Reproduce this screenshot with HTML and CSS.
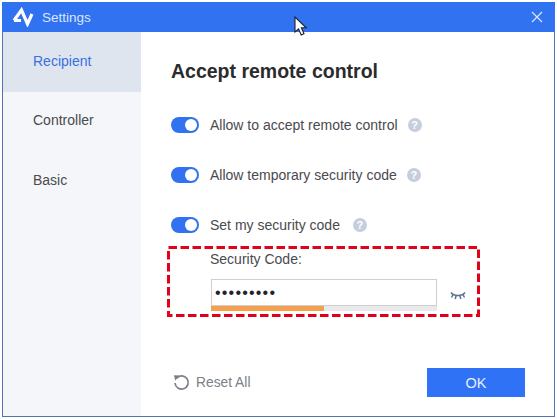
FILE: index.html

```html
<!DOCTYPE html>
<html lang="en">
<head>
    <meta charset="UTF-8">
    <meta name="viewport" content="width=device-width, initial-scale=1.0">
    <title>Settings</title>
    <link rel="stylesheet" href="styles.css">
</head>
<body>

    <div class="fenetre">
        <div class="titre">
            <svg class="logo" width="22" height="20" viewBox="0 0 22 20">
                <path d="M2 13.5H9M2 13.5L9.5 3L15.5 17L20 7" fill="none" stroke="#fff" stroke-width="3.2" stroke-linejoin="miter"/>
            </svg>
            <span class="titre-texte">Settings</span>
            <svg class="fermer" width="12" height="12" viewBox="0 0 12 12">
                <path d="M1 1L11 11M11 1L1 11" stroke="#dbe6fd" stroke-width="1.2"/>
            </svg>
        </div>

        <div class="contenu">
            <div class="menu">
                <div class="menu-item actif">Recipient</div>
                <div class="menu-item">Controller</div>
                <div class="menu-item">Basic</div>
            </div>

            <div class="page">
                <h1>Accept remote control</h1>

                <div class="ligne">
                    <span class="switch"></span>
                    <span>Allow to accept remote control</span>
                    <span class="aide aide-1">?</span>
                </div>
                <div class="ligne">
                    <span class="switch"></span>
                    <span>Allow temporary security code</span>
                    <span class="aide aide-2">?</span>
                </div>
                <div class="ligne">
                    <span class="switch"></span>
                    <span>Set my security code</span>
                    <span class="aide aide-3">?</span>
                </div>

                <div class="cadre">
                    <svg class="pointilles" width="313" height="71" viewBox="0 0 313 71">
                        <rect x="1.5" y="1.5" width="310" height="68" fill="none" stroke="#e2001a" stroke-width="3" stroke-dasharray="8.5 3.5"/>
                    </svg>
                    <div class="label">Security Code:</div>
                    <div class="champ-ligne">
                        <div class="champ-bloc">
                            <div class="champ">•••••••••</div>
                            <div class="force"><div class="force-barre"></div></div>
                        </div>
                        <svg class="oeil" width="16" height="9" viewBox="0 0 16 9">
                            <path d="M1 1.5C4 5.5 12 5.5 15 1.5M3 3.5L1.5 6.5M6 5L5.2 8M10 5L10.8 8M13 3.5L14.5 6.5" fill="none" stroke="#5f7391" stroke-width="1.5"/>
                        </svg>
                    </div>
                </div>

                <div class="bas">
                    <div class="reset">
                        <svg width="17" height="17" viewBox="0 0 17 17">
                            <path d="M3.6 4.2A6.6 6.6 0 1 1 2 9" fill="none" stroke="#7b7f88" stroke-width="1.7"/>
                            <path d="M1 1.2L7 1.6L2.2 6.4Z" fill="#7b7f88"/>
                        </svg>
                        <span>Reset All</span>
                    </div>
                    <button class="ok">OK</button>
                </div>
            </div>
        </div>

        <svg class="curseur" width="14" height="21" viewBox="0 0 14 21">
            <path d="M1 1V16L4.6 12.8L7.2 19L10 17.8L7.4 11.8H12.2Z" fill="#fff" stroke="#1c2430" stroke-width="1.1"/>
        </svg>
    </div>

</body>
</html>
```

FILE: styles.css

```css
*{
    padding: 0;
    margin: 0;
    box-sizing: border-box;
}

body{
    background-color: #fff;
    font-family: "Liberation Sans", Arial, sans-serif;
    color: #4a4a4f;
}

.fenetre{
    position: relative;
    display: flex;
    flex-direction: column;
    width: 553px;
    height: 415px;
    margin: 2px 0 0 2px;
    border: 1px solid #4f74b4;
    border-top: none;
}

.titre{
    display: flex;
    align-items: center;
    height: 30px;
    margin: 0 -1px;
    padding: 0 12px 0 10px;
    background-color: #3072f0;
    color: #dbe6fd;
    font-size: 13.5px;
}

.titre-texte{
    margin-left: 8px;
}

.fermer{
    margin-left: auto;
}

.contenu{
    display: flex;
    flex: 1;
    min-height: 0;
}

.menu{
    width: 138px;
    background-color: #f5f6fa;
}

.menu-item{
    height: 59.5px;
    padding-top: 20.5px;
    padding-left: 30px;
    font-size: 14px;
    line-height: 16px;
}

.actif{
    background-color: #dfe5ee;
    color: #3a70e0;
}

.page{
    display: flex;
    flex: 1;
    flex-direction: column;
    padding: 28px 29px 19px 30px;
}

h1{
    height: 22px;
    margin-bottom: 33px;
    color: #2b2b2e;
    font-size: 19.5px;
    line-height: 22px;
}

.ligne{
    display: flex;
    align-items: center;
    height: 20px;
    margin-bottom: 30px;
    font-size: 14px;
}

.ligne:nth-of-type(3){
    margin-bottom: 0;
}

.switch{
    position: relative;
    width: 28px;
    height: 16px;
    margin-right: 11px;
    border-radius: 8px;
    background-color: #3072f0;
}

.switch::after{
    content: "";
    position: absolute;
    top: 2px;
    right: 2px;
    width: 12px;
    height: 12px;
    border-radius: 50%;
    background-color: #fff;
}

.aide{
    width: 14px;
    height: 14px;
    border-radius: 50%;
    background-color: #c6cede;
    color: #fff;
    font-size: 11px;
    font-weight: bold;
    line-height: 14px;
    text-align: center;
}

.aide-1{
    margin-left: 10px;
}

.aide-2{
    margin-left: 10px;
}

.aide-3{
    margin-left: 13px;
}

.cadre{
    position: relative;
    width: 313px;
    height: 71px;
    margin: 11px 0 0 -4px;
    padding: 4px 0 0 44px;
}

.pointilles{
    position: absolute;
    top: 0;
    left: 0;
}

.label{
    height: 18px;
    margin-left: -1px;
    margin-bottom: 11px;
    font-size: 14px;
    line-height: 18px;
}

.champ-ligne{
    display: flex;
    align-items: center;
}

.champ-bloc{
    width: 226px;
}

.champ{
    height: 27px;
    padding-left: 3px;
    border: 1px solid #cfcfcf;
    color: #22232a;
    font-size: 16px;
    letter-spacing: 1.2px;
    line-height: 25px;
}

.force{
    height: 5px;
    background-color: #e9e9ec;
}

.force-barre{
    width: 113px;
    height: 5px;
    background-color: #f5a04e;
}

.oeil{
    margin: 0 0 0 13px;
}

.bas{
    display: flex;
    align-items: center;
    justify-content: space-between;
    margin-top: auto;
}

.reset{
    display: flex;
    align-items: center;
    margin-left: 2px;
    color: #7b7f88;
    font-size: 13.8px;
}

.reset span{
    margin-left: 6px;
}

.ok{
    width: 98px;
    height: 29px;
    border: none;
    background-color: #3072f5;
    color: #e8efff;
    font-family: inherit;
    font-size: 14.5px;
}

.curseur{
    position: absolute;
    top: 14px;
    left: 291px;
}
```
